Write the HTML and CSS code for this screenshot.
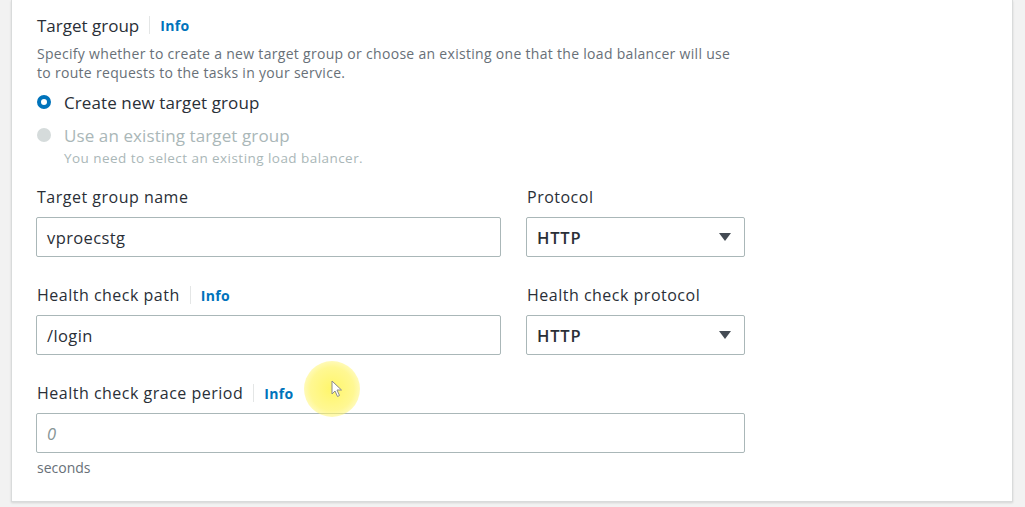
FILE: index.html
```html
<!DOCTYPE html>
<html>
<head>
<meta charset="utf-8">
<link rel="stylesheet" href="styles.css">
</head>
<body>
<div class="card">
  <div class="header">
    <span class="title">Target group</span>
    <span class="sep"></span>
    <a class="info">Info</a>
  </div>
  <p class="desc">Specify whether to create a new target group or choose an existing one that the load balancer will use<br>to route requests to the tasks in your service.</p>
  <div class="radio-row">
    <span class="radio checked"></span>
    <span class="radio-label">Create new target group</span>
  </div>
  <div class="radio-row disabled">
    <span class="radio"></span>
    <span class="radio-label">Use an existing target group</span>
  </div>
  <div class="radio-sub">You need to select an existing load balancer.</div>

  <div class="grid">
    <div class="field">
      <div class="label">Target group name</div>
      <div class="input">vproecstg</div>
    </div>
    <div class="field">
      <div class="label">Protocol</div>
      <div class="input select"><span>HTTP</span><span class="caret"></span></div>
    </div>
    <div class="field">
      <div class="label">Health check path<span class="sep"></span><a class="info">Info</a></div>
      <div class="input">/login</div>
    </div>
    <div class="field">
      <div class="label">Health check protocol</div>
      <div class="input select"><span>HTTP</span><span class="caret"></span></div>
    </div>
    <div class="field wide">
      <div class="label">Health check grace period<span class="sep"></span><a class="info">Info</a></div>
      <div class="input placeholder">0</div>
      <div class="hint">seconds</div>
    </div>
  </div>
  <div class="cursor-glow"></div>
  <svg class="cursor" width="12" height="18" viewBox="0 0 12 18"><path d="M1 1 L1 14 L4 11 L6.5 16.5 L8.5 15.5 L6 10 L10.5 10 Z" fill="#fff" stroke="#8a8a8a" stroke-width="1"/></svg>
</div>
</body>
</html>
```

FILE: styles.css
```css
html, body {
  margin: 0;
  padding: 0;
}
body {
  background: #f2f2f2;
  font-family: "Open Sans", "Noto Sans", sans-serif;
  color: #16191f;
  height: 507px;
  overflow: hidden;
}
.card {
  position: relative;
  margin-left: 11px;
  width: 1002px;
  height: 502px;
  background: #fff;
  border: 1px solid #d9dbdb;
  border-top: none;
  box-shadow: 0 1px 2px rgba(0,0,0,0.12);
  padding: 13px 0 0 24px;
  box-sizing: border-box;
}
.header {
  display: flex;
  align-items: center;
  height: 24px;
  padding-left: 1px;
}
.title {
  font-size: 17px;
  color: #2a2f37;
}
.sep {
  display: inline-block;
  width: 1px;
  height: 18px;
  background: #e4e6e6;
  margin: 0 10px 0 10px;
}
.info {
  color: #0073bb;
  font-weight: 700;
  font-size: 14px;
  letter-spacing: 0.3px;
}
.desc {
  margin: 7px 0 0;
  padding-left: 1px;
  font-size: 14px;
  line-height: 19px;
  letter-spacing: 0.3px;
  color: #687078;
}
.radio-row {
  display: flex;
  align-items: center;
  height: 24px;
  margin-top: 8px;
}
.radio-row.disabled {
  margin-top: 9px;
}
.radio {
  width: 14px;
  height: 14px;
  border-radius: 50%;
  box-sizing: border-box;
  margin-left: 1px;
  margin-right: 13px;
  background: #d5dbdb;
}
.radio.checked {
  background: #fff;
  border: 4px solid #0073bb;
}
.radio-label {
  font-size: 17px;
  letter-spacing: 0.1px;
  color: #2a2f37;
}
.disabled .radio-label {
  color: #aab7b8;
}
.radio-sub {
  margin-left: 28px;
  margin-top: 3px;
  font-size: 13.5px;
  line-height: 16px;
  letter-spacing: 0.45px;
  color: #aab7b8;
}
.grid {
  display: grid;
  grid-template-columns: 465px 219px;
  column-gap: 25px;
  row-gap: 27px;
  margin-top: 20px;
}
.field.wide {
  grid-column: 1 / span 2;
}
.label {
  display: flex;
  align-items: center;
  height: 22px;
  padding-left: 1px;
  font-size: 16px;
  letter-spacing: 0.5px;
  color: #2a2f37;
  margin-bottom: 9px;
}
.label .info {
  letter-spacing: 0.3px;
}
.input {
  height: 40px;
  box-sizing: border-box;
  border: 1px solid #aab7b8;
  border-radius: 2px;
  padding: 0 10px;
  display: flex;
  align-items: center;
  font-size: 16.5px;
  letter-spacing: 0.4px;
  color: #2a2f37;
}
.select {
  justify-content: space-between;
  font-weight: 600;
  letter-spacing: 0.8px;
  padding-right: 13px;
}
.caret {
  width: 0;
  height: 0;
  border-left: 6.5px solid transparent;
  border-right: 6.5px solid transparent;
  border-top: 8px solid #444b54;
}
.placeholder {
  font-style: italic;
  color: #879596;
}
.hint {
  margin-top: 7px;
  padding-left: 1px;
  font-size: 14px;
  line-height: 16px;
  color: #687078;
}
.cursor-glow {
  position: absolute;
  left: 292px;
  top: 361px;
  width: 56px;
  height: 56px;
  border-radius: 50%;
  background: radial-gradient(circle, rgba(255,245,90,0.9) 0%, rgba(255,245,110,0.75) 55%, rgba(255,250,180,0) 100%);
}
.cursor {
  position: absolute;
  left: 319px;
  top: 380px;
}
```
